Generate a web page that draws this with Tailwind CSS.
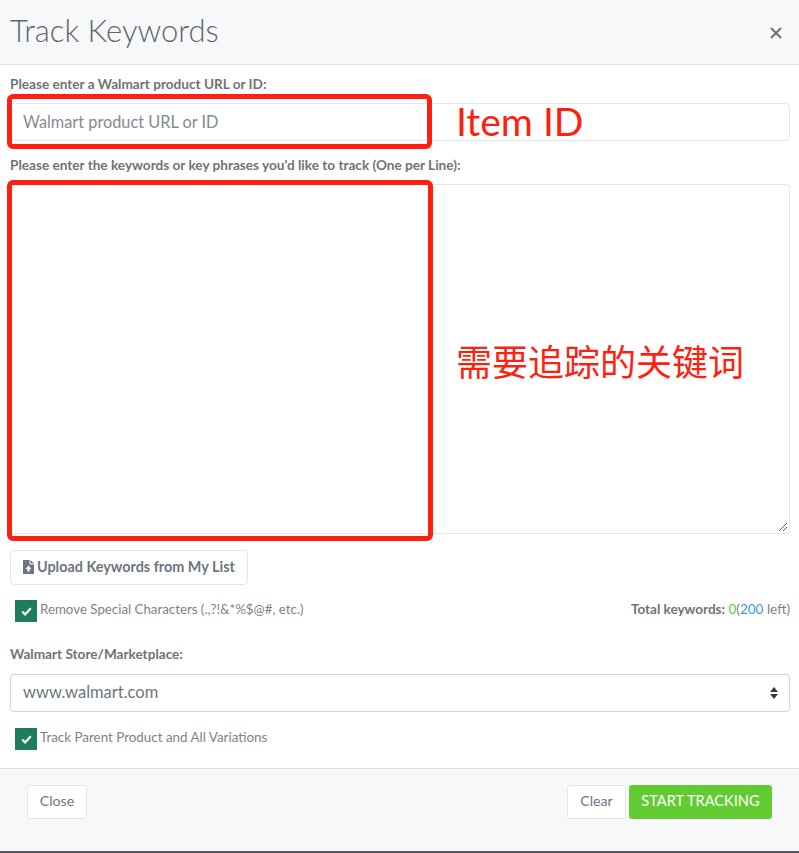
<!DOCTYPE html>
<html lang="en">
<head>
    <meta charset="UTF-8">
    <title>Track Keywords</title>
    <script src="https://cdn.jsdelivr.net/npm/@tailwindcss/browser@4"></script>
</head>
<body class="bg-white font-['Lato','Noto_Sans',sans-serif] text-[#6c757d]">
    <div class="relative w-[799px] h-[853px] overflow-hidden bg-[#54565a]">
        <div class="flex flex-col h-[851px] bg-white rounded-b-[4px]">
            <!-- Header -->
            <div class="flex items-center justify-between h-[65px] shrink-0 pl-[10px] pr-[17px] bg-[#f7f8fa] border-b border-[#dee2e6]">
                <h1 class="text-[31px] leading-none pb-[4px] font-light text-[#5f666d]">Track Keywords</h1>
                <svg class="w-[12px] h-[12px] mt-[2px]" viewBox="0 0 12 12" fill="none" stroke="#6e7277" stroke-width="2"><path d="M1 1l10 10M11 1L1 11"/></svg>
            </div>

            <!-- Body -->
            <div class="flex-1 px-[10px] pr-[9px]">
                <label class="block mt-[10px] h-[18px] text-[13.6px] leading-[18px] font-bold text-[#6f7377]">Please enter a Walmart product URL or ID:</label>
                <div class="mt-[10px] h-[38px] flex items-center px-[12px] border border-[#e4e6e9] rounded-[4px] text-[16.3px] text-[#858b91]">Walmart product URL or ID</div>

                <label class="block mt-[15px] h-[18px] text-[13.6px] leading-[18px] font-bold text-[#6f7377]">Please enter the keywords or key phrases you'd like to track (One per Line):</label>
                <div class="relative mt-[10px] h-[350px] border border-[#e4e6e9] rounded-[4px]">
                    <svg class="absolute right-[1px] bottom-[1px] w-[10px] h-[10px]" viewBox="0 0 10 10" stroke="#555" stroke-width="1"><path d="M1 9l8-8M5 9l4-4"/></svg>
                </div>

                <button class="flex items-center gap-[3px] mt-[16px] h-[35px] w-[238px] pb-[2px] pl-[12px] border border-[#e4e6e9] rounded-[4px] text-[14.4px] font-bold text-[#6c757d]">
                    <svg class="w-[11px] h-[14px]" viewBox="0 0 11 14"><path fill="#6c757d" d="M0 0h6.500v4.500H11V14H0zM7.500 0L11 3.500H7.500z"/><path fill="#fff" d="M5.500 5.500L8.500 9H6.600v2.600H4.400V9H2.500z"/></svg>
                    Upload Keywords from My List
                </button>

                <div class="flex items-start justify-between mt-[15px] h-[22px]">
                    <div class="flex items-start gap-[3px] pl-[5px]">
                        <span class="flex items-center justify-center w-[22px] h-[22px] bg-[#1e7e5a]">
                            <svg class="w-[11px] h-[9px]" viewBox="0 0 12 10" fill="none" stroke="#fff" stroke-width="2.400"><path d="M1.200 5l3.200 3.200L10.800 1.500"/></svg>
                        </span>
                        <span class="text-[13.3px] leading-[18px] text-[#7d8389]">Remove Special Characters (.,?!&amp;*%$@#, etc.)</span>
                    </div>
                    <div class="text-[13.5px] leading-[18px] text-[#7d8389]"><b class="text-[#6f7377]">Total keywords:</b> <span class="text-[#66cc33]">0</span>(<span class="text-[#3d9be0]">200</span> left)</div>
                </div>

                <label class="block mt-[23px] h-[18px] text-[13.6px] leading-[18px] font-bold text-[#6f7377]">Walmart Store/Marketplace:</label>
                <div class="flex items-center justify-between mt-[11px] h-[38px] pb-[2px] pl-[12px] pr-[11px] border border-[#ced4da] rounded-[4px] text-[16.5px] text-[#6c757d]">
                    www.walmart.com
                    <svg class="w-[8px] h-[12px] mt-[2px]" viewBox="0 0 8 12" fill="#343a40"><path d="M4 0l4 5H0zM4 12l4-5H0z"/></svg>
                </div>

                <div class="flex items-start gap-[3px] pl-[5px] mt-[16px] h-[22px]">
                    <span class="flex items-center justify-center w-[22px] h-[22px] bg-[#1e7e5a]">
                        <svg class="w-[11px] h-[9px]" viewBox="0 0 12 10" fill="none" stroke="#fff" stroke-width="2.400"><path d="M1.200 5l3.200 3.200L10.800 1.500"/></svg>
                    </span>
                    <span class="text-[13.4px] leading-[18px] text-[#7d8389]">Track Parent Product and All Variations</span>
                </div>
            </div>

            <!-- Footer -->
            <div class="flex items-start justify-between h-[83px] shrink-0 pt-[16px] pl-[27px] pr-[27px] bg-[#f7f8fa] border-t border-[#dee2e6] text-[14.2px]">
                <button class="h-[34px] w-[60px] pb-[2px] bg-white border border-[#e4e6e9] rounded-[3px] text-[#6c757d]">Close</button>
                <div class="flex gap-[3px]">
                    <button class="h-[34px] w-[59px] pb-[2px] bg-white border border-[#e4e6e9] rounded-[3px] text-[#6c757d]">Clear</button>
                    <button class="h-[34px] w-[143px] pb-[2px] bg-[#62cb31] rounded-[3px] text-[14.6px] text-white">START TRACKING</button>
                </div>
            </div>
        </div>

        <!-- Red annotations over the form -->
        <div class="absolute left-[7px] top-[94px] w-[425px] h-[55px] border-[5px] border-[#ff1f10] rounded-[6px]"></div>
        <div class="absolute left-[7px] top-[180px] w-[426px] h-[361px] border-[5px] border-[#ff1f10] rounded-[6px]"></div>
        <div class="absolute left-[456px] top-[98px] text-[39px] leading-[46px] text-[#ff1f10] whitespace-nowrap">Item ID</div>
        <div class="absolute left-[456px] top-[337px] text-[36px] leading-[46px] text-[#ff1f10] whitespace-nowrap font-['Noto_Sans_CJK_SC',sans-serif]">需要追踪的关键词</div>
    </div>
</body>
</html>
